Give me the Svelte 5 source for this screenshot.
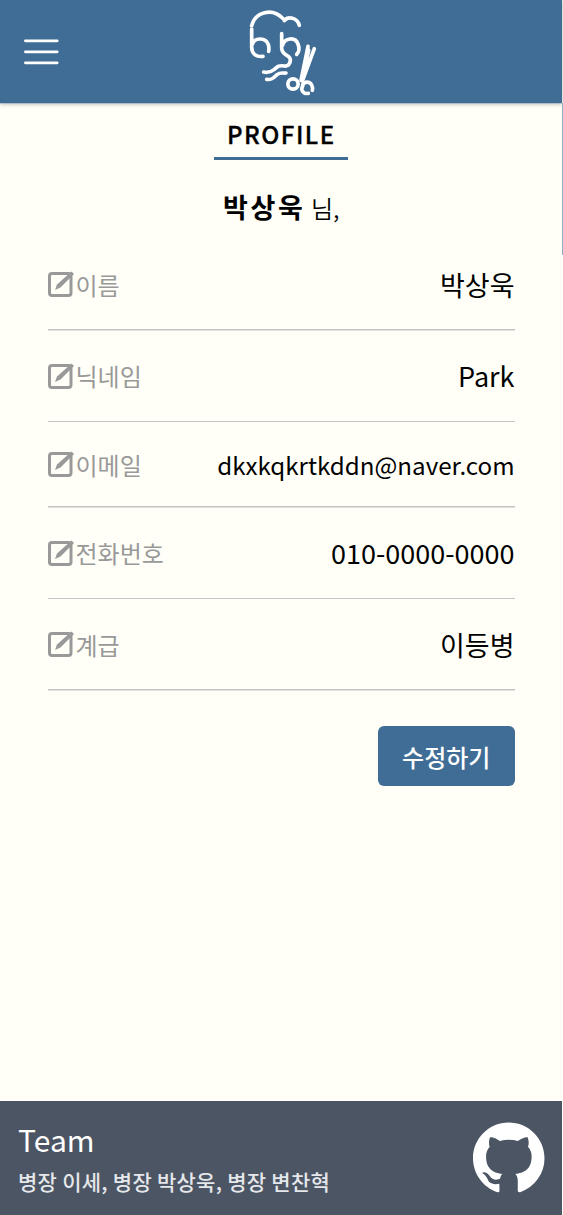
<script>
  const fields = [
    { label: '이름', value: '박상욱' },
    { label: '닉네임', value: 'Park' },
    { label: '이메일', value: 'dkxkqkrtkddn@naver.com', compact: true },
    { label: '전화번호', value: '010-0000-0000' },
    { label: '계급', value: '이등병' }
  ];
</script>

<div class="page">
  <header>
    <button class="menu" aria-label="menu">
      <svg width="36" height="28" viewBox="0 0 36 28" stroke="#fff" stroke-width="2.8" stroke-linecap="round">
        <path d="M1.4 2.8H33.2M1.4 13.8H33.2M1.4 24.8H33.2" />
      </svg>
    </button>
    <svg class="logo" width="100" height="103" viewBox="0 0 300 309" fill="none" stroke="#fff" stroke-width="11" stroke-linecap="round" stroke-linejoin="round">
      <path d="M65 77C76 35 127 23 158 55M163 62C174 48 202 52 208 76" />
      <path d="M65 87V142C65 161 79 172 99 169M67 133C73 111 108 112 115 134Q118 144 116 154" />
      <path d="M155 101V145C155 158 165 164 176 170C186 179 180 200 163 198C147 195 142 200 132 209C121 218 111 218 101 216M157 137C164 112 196 110 204 132C209 145 206 157 200 163" />
      <path d="M110 238C127 241 132 232 141 224C151 216 158 220 168 219" />
      <path d="M234 139L213 241M253 146L217 243M236 150L220 224" />
      <circle cx="189" cy="252" r="15.5" />
      <path d="M218 254C223 244 239 243 245 255Q249 263 247 271M219 256C210 271 221 283 235 280" />
    </svg>
  </header>

  <main>
    <h1>PROFILE</h1>
    <p class="greeting"><strong>박상욱</strong> 님,</p>
    <ul>
      {#each fields as field}
        <li class:compact={field.compact}>
          <span class="label">
            <svg width="27.5" height="28" viewBox="0 0 27.5 28" fill="none" stroke="#999">
              <rect x="1.5" y="3.5" width="21.5" height="22" rx="2.5" stroke-width="3" />
              <path d="M7 20L9 14.5L23.5 1.5L26 4L12.5 17.5Z" fill="#999" stroke="none" />
            </svg>
            {field.label}
          </span>
          <span class="value">{field.value}</span>
        </li>
      {/each}
    </ul>
    <button class="edit">수정하기</button>
    <i class="scroll"></i>
  </main>

  <footer>
    <div>
      <h2>Team</h2>
      <p>병장 이세, 병장 박상욱, 병장 변찬혁</p>
    </div>
    <svg width="71.5" height="72" viewBox="0 0 16 15.9" fill="#fff">
      <path d="M8 0C3.58 0 0 3.58 0 8c0 3.54 2.29 6.53 5.47 7.59.4.07.55-.17.55-.38 0-.19-.01-.82-.01-1.49-2.01.37-2.53-.49-2.69-.94-.09-.23-.48-.94-.82-1.13-.28-.15-.68-.52-.01-.53.63-.01 1.08.58 1.23.82.72 1.21 1.87.87 2.33.66.07-.52.28-.87.51-1.07-1.78-.2-3.64-.89-3.64-3.95 0-.87.31-1.59.82-2.15-.08-.2-.36-1.02.08-2.12 0 0 .67-.21 2.2.82.64-.18 1.32-.27 2-.27s1.36.09 2 .27c1.53-1.04 2.2-.82 2.2-.82.44 1.1.16 1.92.08 2.12.51.56.82 1.27.82 2.15 0 3.07-1.87 3.75-3.65 3.95.29.25.54.73.54 1.48 0 1.07-.01 1.93-.01 2.2 0 .21.15.46.55.38A8.01 8.01 0 0 0 16 8c0-4.42-3.58-8-8-8z" />
      <path d="M5.9 13H9.9V16H5.95Z" fill="#4b5563" />
    </svg>
  </footer>
</div>

<style>
  :global(body) { background: #fffff7; }
  .page {
    display: flex;
    flex-direction: column;
    height: 1215px;
    overflow: hidden;
    box-sizing: border-box;
    background: #fffff7;
    color: #000;
    font-family: "Noto Sans CJK KR", "Noto Sans", sans-serif;
  }
  header {
    display: grid;
    grid-template-columns: 1fr 100px 1fr;
    flex: 0 0 103px;
    margin-right: 1px;
    background: #406d96;
    box-shadow: 0 .5px 0 #8fa9be, 0 1px 4px rgba(0, 0, 0, .3);
  }
  .menu {
    align-self: center;
    justify-self: start;
    display: flex;
    margin-left: 24px;
    padding: 0;
    border: 0;
    background: none;
  }
  .logo { margin-left: -1px; }
  main {
    position: relative;
    flex: 1;
    display: flex;
    flex-direction: column;
    padding: 13px 48.5px 0 48px;
  }
  h1 {
    align-self: center;
    box-sizing: border-box;
    width: 134px;
    height: 44px;
    margin: 0;
    background: linear-gradient(#406d96, #406d96) left bottom / 100% 3px no-repeat;
    font-size: 24px;
    line-height: 36px;
    font-weight: 500;
    letter-spacing: 1.5px;
    text-align: center;
    -webkit-text-stroke: .35px #000;
  }
  .greeting {
    margin: 27px 0 0;
    font-size: 24px;
    line-height: 40px;
    font-weight: 350;
    text-align: center;
  }
  strong { font-size: 27px; font-weight: 700; letter-spacing: 2.7px; }
  ul { list-style: none; margin: 11px 0 0; padding: 0; }
  li {
    display: flex;
    align-items: center;
    justify-content: space-between;
    box-sizing: border-box;
    height: 91.5px;
    padding-bottom: 1px;
    background: linear-gradient(#c4c4c4, #c4c4c4) left bottom / 100% 1.5px no-repeat;
  }
  .compact { height: 85.5px; }
  .label { display: flex; align-items: center; color: #999; font-size: 24px; }
  .value { font-size: 27px; }
  .compact .value { font-size: 24.15px; }
  .edit {
    align-self: flex-end;
    width: 136.5px;
    height: 60px;
    margin-top: 35.5px;
    padding: 0;
    border: 0;
    border-radius: 6px;
    background: #406d96;
    color: #fff;
    font: 500 24px "Noto Sans CJK KR", sans-serif;
  }
  .scroll {
    position: absolute;
    right: 0;
    top: 0;
    width: 1px;
    height: 152px;
    background: #93adc5;
  }
  footer {
    display: flex;
    align-items: center;
    justify-content: space-between;
    box-sizing: border-box;
    flex: 0 0 114px;
    margin-right: 1px;
    padding: 0 17.5px 0 18px;
    background: #4b5563;
    color: #fff;
  }
  h2 { margin: 4px 0 0; font-size: 30px; line-height: 42px; font-weight: 400; }
  footer p { margin: 0; font-size: 21px; line-height: 42px; font-weight: 500; letter-spacing: .26px; color: #e5e7eb; }
</style>
